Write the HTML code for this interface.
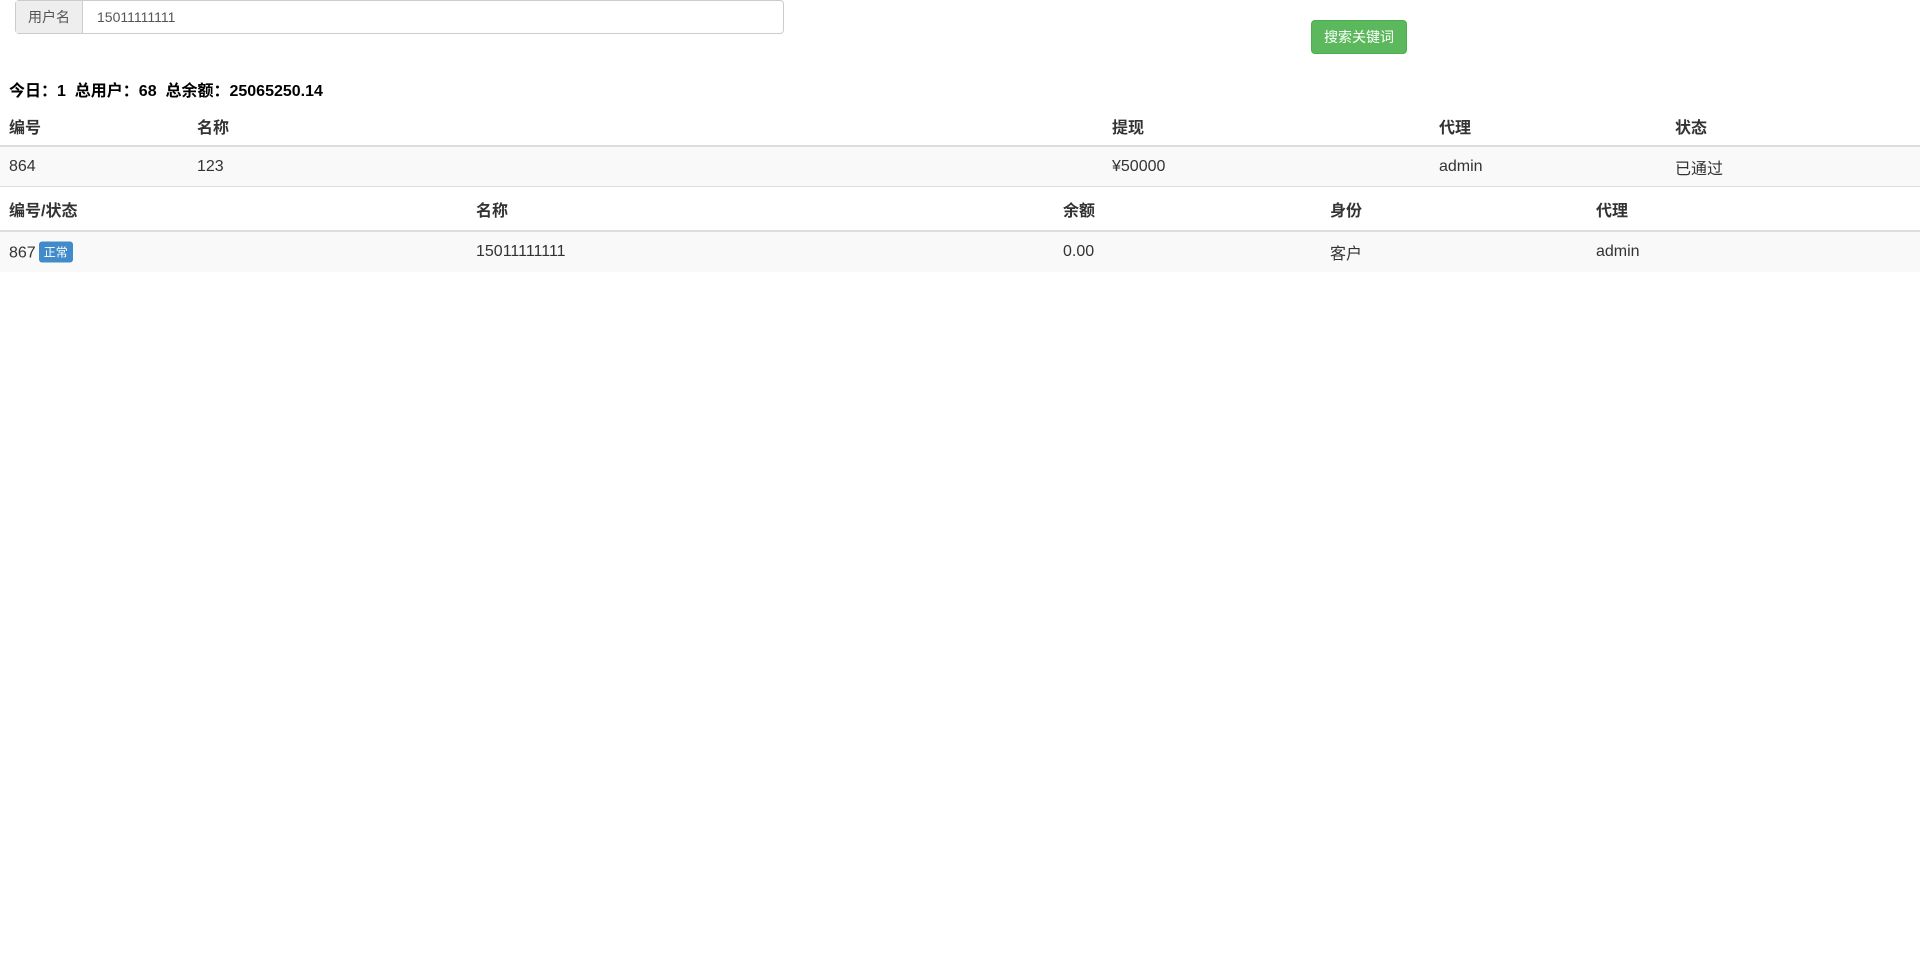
<!DOCTYPE html>
<html><head><meta charset="utf-8">
<style>
*{box-sizing:border-box;margin:0;padding:0}
body{width:1920px;height:955px;background:#fff;font-family:"Liberation Sans","Noto Sans CJK SC",sans-serif;font-size:16px;color:#333;position:relative;overflow:hidden}
.abs{position:absolute}
.ig{left:15px;top:0;width:769px;height:34px;border:1px solid #ccc;border-radius:4px;display:flex}
.ad{width:67px;background:#eee;border-right:1px solid #ccc;font-size:14px;display:flex;align-items:center;justify-content:center;color:#555}
.iv{padding-left:14px;font-size:14px;display:flex;align-items:center;color:#555}
.btn{left:1311px;top:20px;width:96px;height:34px;background:#5cb85c;border:1px solid #4cae4c;border-radius:4px;color:#fff;font-size:14px;display:flex;align-items:center;justify-content:center}
.stats{left:9px;top:77px;font-weight:bold;color:#000;font-size:16px}
.row{position:absolute;left:0;width:1920px}
.hd{background:#fff;border-bottom:2px solid #ddd;font-weight:bold}
.bd{background:#f9f9f9;border-bottom:1px solid #ddd}
.c{position:absolute;top:50%;transform:translateY(-50%);white-space:nowrap}
.lbl{display:inline-block;background:#428bca;color:#fff;font-size:12px;padding:2px 5px;border-radius:3px;vertical-align:1px;margin-left:3px}
</style></head><body>
<div class="abs ig"><div class="ad">用户名</div><div class="iv">15011111111</div></div>
<div class="abs btn">搜索关键词</div>
<div class="abs stats">今日：1&nbsp; 总用户：68&nbsp; 总余额：25065250.14</div>

<div class="row hd" style="top:106px;height:41px">
<span class="c" style="left:9px">编号</span><span class="c" style="left:197px">名称</span><span class="c" style="left:1112px">提现</span><span class="c" style="left:1439px">代理</span><span class="c" style="left:1675px">状态</span>
</div>
<div class="row bd" style="top:147px;height:40px">
<span class="c" style="left:9px">864</span><span class="c" style="left:197px">123</span><span class="c" style="left:1112px">¥50000</span><span class="c" style="left:1439px">admin</span><span class="c" style="left:1675px">已通过</span>
</div>
<div class="row hd" style="top:187px;height:45px">
<span class="c" style="left:9px">编号/状态</span><span class="c" style="left:476px">名称</span><span class="c" style="left:1063px">余额</span><span class="c" style="left:1330px">身份</span><span class="c" style="left:1596px">代理</span>
</div>
<div class="row bd" style="top:232px;height:40px;border-bottom:none">
<span class="c" style="left:9px">867<span class="lbl">正常</span></span><span class="c" style="left:476px">15011111111</span><span class="c" style="left:1063px">0.00</span><span class="c" style="left:1330px">客户</span><span class="c" style="left:1596px">admin</span>
</div>
</body></html>
